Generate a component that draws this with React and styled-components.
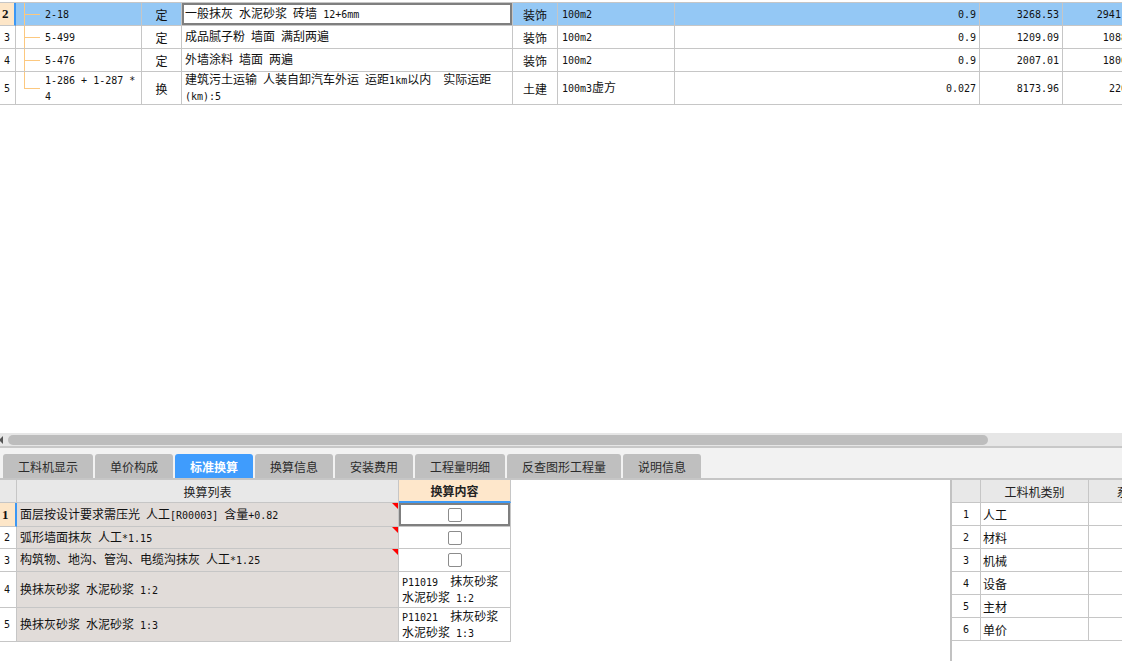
import React from "react";
import styled, { createGlobalStyle } from "styled-components";

const line = "#c6c6c6";

const GlobalStyle = createGlobalStyle`
  *, *::before, *::after { box-sizing: border-box; }
  html, body { margin: 0; padding: 0; background: #fff; }
  body {
    font-family: "Noto Sans CJK SC", sans-serif;
    font-size: 12px;
    color: #111;
    overflow: hidden;
  }
`;

const Page = styled.div`
  display: flex;
  flex-direction: column;
  width: 1122px;
  height: 661px;
  overflow: hidden;
`;

/* ---------- text helper: half-width runs in a 6px mono ---------- */

const Latin = styled.span`
  font-family: "DejaVu Sans Mono", monospace;
  font-size: 10px;
`;

const Inner = styled.span`
  display: block;
  white-space: pre;
  line-height: 14px;
`;

const Txt = ({ children }) => (
  <Inner>
    {String(children)
      .split(/([\x00-\xff]+)/)
      .filter(Boolean)
      .map((part, i) =>
        /[\x00-\xff]/.test(part[0]) ? (
          <Latin key={i}>{part}</Latin>
        ) : (
          <React.Fragment key={i}>{part}</React.Fragment>
        )
      )}
  </Inner>
);

/* ---------- grid cells ---------- */

const justify = { left: "flex-start", center: "center", right: "flex-end" };

const Cell = styled.div`
  position: relative;
  display: flex;
  align-items: center;
  justify-content: ${({ $align }) => justify[$align || "left"]};
  padding: 0 ${({ $pad }) => ($pad ?? 3)}px;
  border-right: 1px solid ${line};
  border-bottom: 1px solid ${line};
  background: ${({ $bg }) => $bg || "transparent"};
  box-shadow: ${({ $focus }) => ($focus ? "inset 0 0 0 2px #7f7f7f" : "none")};
  overflow: hidden;
`;

const RowHead = styled(Cell)`
  padding-left: ${({ $active }) => ($active ? 2 : 4)}px;
  background: ${({ $active }) => ($active ? "#fde6c8" : "#fff")};
  border-right: ${({ $active }) => ($active ? "2px solid #3b97f4" : `1px solid ${line}`)};
  font-family: ${({ $active }) => ($active ? '"Liberation Serif", serif' : '"DejaVu Sans Mono", monospace')};
  font-size: ${({ $active }) => ($active ? 13 : 10)}px;
  font-weight: ${({ $active }) => ($active ? 700 : 400)};
`;

const CodeCell = styled(Cell)`
  padding-left: 29px;

  &::before {
    content: "";
    position: absolute;
    left: 8px;
    top: 0;
    bottom: ${({ $last }) => ($last ? "50%" : "0")};
    width: 1px;
    background: #fcc87f;
  }

  &::after {
    content: "";
    position: absolute;
    left: 8px;
    top: 50%;
    width: 16px;
    height: 1px;
    background: #fcc87f;
  }
`;

/* ---------- top grid ---------- */

const TopGrid = styled.div`
  margin-top: 2px;
  border-top: 1px solid ${line};
  width: 1149px;
  flex-shrink: 0;
`;

const TopRow = styled.div`
  display: grid;
  grid-template-columns: 16px 126px 40px 331px 45px 117px 305px 83px 86px;
  height: ${({ $h }) => $h}px;
  background: ${({ $sel }) => ($sel ? "#94c8f5" : "#fff")};
`;

const Spacer = styled.div`
  flex: 1;
`;

/* ---------- horizontal scrollbar ---------- */

const HScroll = styled.div`
  display: flex;
  align-items: center;
  height: 15px;
  background: #e6e6e6;
  border-bottom: 2px solid #c8c8c8;
  flex-shrink: 0;
`;

const ScrollArrow = styled.span`
  width: 0;
  height: 0;
  margin-left: -1px;
  border-top: 4px solid transparent;
  border-bottom: 4px solid transparent;
  border-right: 4px solid #555;
`;

const Thumb = styled.div`
  margin-left: 5px;
  width: ${({ $w }) => $w}px;
  height: 10px;
  border-radius: 5px;
  background: #bdbdbd;
`;

/* ---------- tabs ---------- */

const TabBar = styled.div`
  display: flex;
  align-items: flex-end;
  gap: 2px;
  height: 32px;
  padding-left: 3px;
  background: #f2f2f2;
  border-bottom: 2px solid #c6c6c6;
  flex-shrink: 0;
`;

const Tab = styled.div`
  display: flex;
  align-items: center;
  height: 24px;
  padding: 0 15px;
  border-radius: 3px 3px 0 0;
  background: ${({ $active }) => ($active ? "#3f9cfd" : "#bfbfbf")};
  color: ${({ $active }) => ($active ? "#fff" : "#2b2b2b")};
  font-weight: ${({ $active }) => ($active ? 700 : 400)};
  font-size: 12px;
`;

/* ---------- bottom panels ---------- */

const Bottom = styled.div`
  display: flex;
  height: 181px;
  flex-shrink: 0;
`;

const LeftPane = styled.div`
  width: 950px;
  flex-shrink: 0;
`;

const RightPane = styled.div`
  flex: 1;
  border-left: 2px solid #c2c2c2;
  overflow: hidden;
`;

const RuleRow = styled.div`
  display: grid;
  grid-template-columns: 17px 382px 112px;
  width: 511px;
  height: ${({ $h }) => $h}px;
`;

const CatRow = styled.div`
  display: grid;
  grid-template-columns: 29px 108px 80px;
  width: 217px;
  height: 23px;
`;

const HeadCell = styled(Cell)`
  justify-content: center;
  background: ${({ $accent }) => ($accent ? "#fee7cb" : "#e8e8e8")};
  border-bottom: ${({ $accent }) => ($accent ? "2px solid #3d9af7" : `1px solid ${line}`)};
  font-weight: ${({ $accent }) => ($accent ? 700 : 400)};
  color: #222;
`;

const NameCell = styled(Cell)`
  background: #e1dcd9;

  &::after {
    content: "";
    display: ${({ $flag }) => ($flag ? "block" : "none")};
    position: absolute;
    top: 0;
    right: 0;
    border-top: 6px solid #f00;
    border-left: 6px solid transparent;
  }
`;

const CheckBox = styled.span`
  width: 14px;
  height: 14px;
  border: 1px solid #8c8c8c;
  border-radius: 2px;
  background: #fff;
`;

const NumCell = styled(Cell)`
  justify-content: center;
  padding: 0;
  font-family: "DejaVu Sans Mono", monospace;
  font-size: 10px;
  background: #fff;
`;

/* ---------- data ---------- */

const items = [
  { no: 2, code: "2-18", type: "定", name: "一般抹灰 水泥砂浆 砖墙 12+6mm", cat: "装饰", unit: "100m2", qty: "0.9", price: "3268.53", total: "2941.677", h: 23 },
  { no: 3, code: "5-499", type: "定", name: "成品腻子粉 墙面 满刮两遍", cat: "装饰", unit: "100m2", qty: "0.9", price: "1209.09", total: "1088.18", h: 23 },
  { no: 4, code: "5-476", type: "定", name: "外墙涂料 墙面 两遍", cat: "装饰", unit: "100m2", qty: "0.9", price: "2007.01", total: "1806.31", h: 23 },
  { no: 5, code: "1-286 + 1-287 *\n4", type: "换", name: "建筑污土运输 人装自卸汽车外运 运距1km以内  实际运距\n(km):5", cat: "土建", unit: "100m3虚方", qty: "0.027", price: "8173.96", total: "220.70", h: 33 },
];

const tabs = ["工料机显示", "单价构成", "标准换算", "换算信息", "安装费用", "工程量明细", "反查图形工程量", "说明信息"];

const rules = [
  { no: 1, name: "面层按设计要求需压光 人工[R00003] 含量+0.82", check: true, h: 24 },
  { no: 2, name: "弧形墙面抹灰 人工*1.15", check: true, h: 22 },
  { no: 3, name: "构筑物、地沟、管沟、电缆沟抹灰 人工*1.25", check: true, h: 23 },
  { no: 4, name: "换抹灰砂浆 水泥砂浆 1:2", value: "P11019  抹灰砂浆\n水泥砂浆 1:2", h: 36 },
  { no: 5, name: "换抹灰砂浆 水泥砂浆 1:3", value: "P11021  抹灰砂浆\n水泥砂浆 1:3", h: 34 },
];

const categories = ["人工", "材料", "机械", "设备", "主材", "单价"];

export default function App() {
  return (
    <Page>
      <GlobalStyle />

      <TopGrid>
        {items.map((it, i) => {
          const sel = i === 0;
          return (
            <TopRow key={it.no} $h={it.h} $sel={sel}>
              <RowHead $active={sel}>{it.no}</RowHead>
              <CodeCell $last={i === items.length - 1}>
                <Txt>{it.code}</Txt>
              </CodeCell>
              <Cell $align="center">{it.type}</Cell>
              <Cell $focus={sel} $bg={sel ? "#fff" : undefined}>
                <Txt>{it.name}</Txt>
              </Cell>
              <Cell $align="center">{it.cat}</Cell>
              <Cell $pad={4}>
                <Txt>{it.unit}</Txt>
              </Cell>
              <Cell $align="right">
                <Txt>{it.qty}</Txt>
              </Cell>
              <Cell $align="right">
                <Txt>{it.price}</Txt>
              </Cell>
              <Cell $align="right">
                <Txt>{it.total}</Txt>
              </Cell>
            </TopRow>
          );
        })}
      </TopGrid>

      <Spacer />

      <HScroll>
        <ScrollArrow />
        <Thumb $w={980} />
      </HScroll>

      <TabBar>
        {tabs.map((t) => (
          <Tab key={t} $active={t === "标准换算"}>
            {t}
          </Tab>
        ))}
      </TabBar>

      <Bottom>
        <LeftPane>
          <RuleRow $h={23}>
            <HeadCell />
            <HeadCell>换算列表</HeadCell>
            <HeadCell $accent>换算内容</HeadCell>
          </RuleRow>
          {rules.map((r, i) => (
            <RuleRow key={r.no} $h={r.h}>
              <RowHead $active={i === 0}>{r.no}</RowHead>
              <NameCell $flag={r.check}>
                <Txt>{r.name}</Txt>
              </NameCell>
              <Cell $align={r.check ? "center" : "left"} $bg="#fff" $focus={i === 0}>
                {r.check ? <CheckBox /> : <Txt>{r.value}</Txt>}
              </Cell>
            </RuleRow>
          ))}
        </LeftPane>

        <RightPane>
          <CatRow>
            <HeadCell />
            <HeadCell>工料机类别</HeadCell>
            <HeadCell>系数</HeadCell>
          </CatRow>
          {categories.map((c, i) => (
            <CatRow key={c}>
              <NumCell>{i + 1}</NumCell>
              <Cell $pad={2} $bg="#fff">{c}</Cell>
              <Cell $bg="#fff" />
            </CatRow>
          ))}
        </RightPane>
      </Bottom>
    </Page>
  );
}
